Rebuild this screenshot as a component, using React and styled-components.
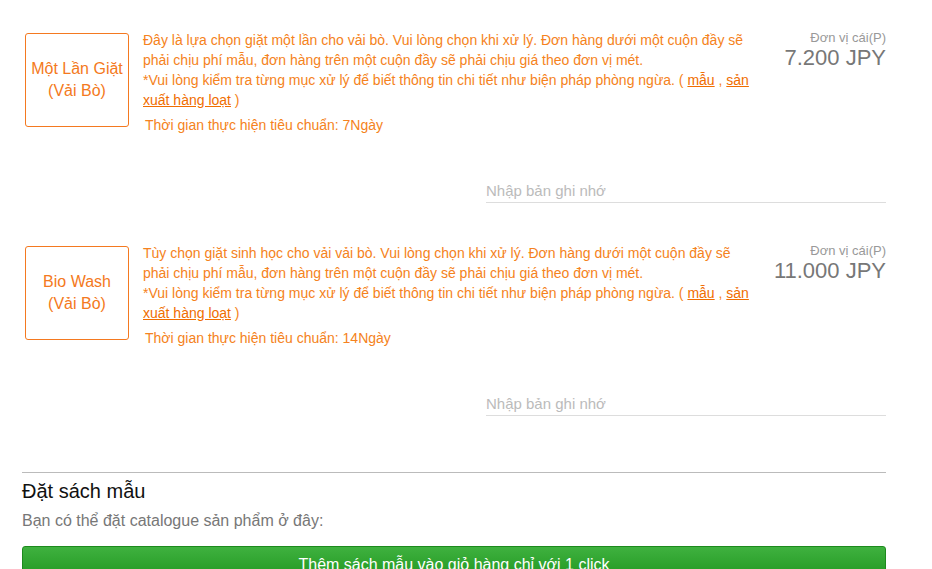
import React from "react";
import styled, { createGlobalStyle } from "styled-components";

const GlobalStyle = createGlobalStyle`
  html, body {
    margin: 0;
    padding: 0;
    background: #fff;
    font-family: "Liberation Sans", Arial, sans-serif;
  }
`;

const Page = styled.div`
  width: 864px;
  padding: 30px 0 0 22px;
`;

const Item = styled.div`
  display: flex;
  flex-direction: column;
  margin-bottom: 40px;
`;

const ItemRow = styled.div`
  display: flex;
  align-items: flex-start;
  padding-left: 3px;
`;

const NameBox = styled.div`
  flex: none;
  width: 102px;
  height: 92px;
  margin-top: 3px;
  border: 1px solid #f47920;
  border-radius: 3px;
  display: flex;
  align-items: center;
  justify-content: center;
  text-align: center;
  color: #f47920;
  font-size: 16px;
  line-height: 22px;
`;

const Detail = styled.div`
  width: 612px;
  margin-left: 14px;
  color: #f58220;
  font-size: 14px;
  line-height: 20px;
`;

const Link = styled.a`
  color: #f06d00;
  text-decoration: underline;
`;

const LeadTime = styled.div`
  margin-top: 5px;
  padding-left: 2px;
`;

const PriceCol = styled.div`
  flex: 1;
  display: flex;
  flex-direction: column;
  align-items: flex-end;
  margin-top: 1px;
`;

const PriceUnit = styled.div`
  color: #999;
  font-size: 13px;
  line-height: 14px;
`;

const PriceValue = styled.div`
  color: #777;
  font-size: 22px;
  line-height: 26px;
`;

const MemoRow = styled.div`
  display: flex;
  justify-content: flex-end;
  margin-top: 43px;
`;

const MemoInput = styled.input`
  width: 400px;
  height: 24px;
  border: none;
  border-bottom: 1px solid #ddd;
  padding: 0;
  font-family: inherit;
  font-size: 15px;
  color: #555;
  outline: none;
  &::placeholder {
    color: #bbb;
  }
`;

const Divider = styled.hr`
  margin: 56px 0 0;
  border: none;
  border-top: 1px solid #bbb;
`;

const SectionTitle = styled.h3`
  margin: 5px 0 0;
  font-weight: normal;
  font-size: 20px;
  line-height: 26px;
  color: #111;
`;

const SectionText = styled.p`
  margin: 7px 0 0;
  font-size: 16px;
  line-height: 20px;
  color: #777;
`;

const GreenButton = styled.button`
  display: block;
  width: 100%;
  height: 40px;
  margin-top: 15px;
  border: 1px solid #1d8a1d;
  border-radius: 3px;
  background: linear-gradient(#3fb13f, #1a921a);
  color: #fff;
  font-family: inherit;
  font-size: 16px;
  padding: 0 0 2px;
  cursor: pointer;
`;

const items = [
  {
    name: ["Một Lần Giặt", "(Vải Bò)"],
    text: "Đây là lựa chọn giặt một lần cho vải bò. Vui lòng chọn khi xử lý. Đơn hàng dưới một cuộn đầy sẽ phải chịu phí mẫu, đơn hàng trên một cuộn đầy sẽ phải chịu giá theo đơn vị mét.",
    days: "7Ngày",
    price: "7.200 JPY",
  },
  {
    name: ["Bio Wash", "(Vải Bò)"],
    text: "Tùy chọn giặt sinh học cho vải vải bò. Vui lòng chọn khi xử lý. Đơn hàng dưới một cuộn đầy sẽ phải chịu phí mẫu, đơn hàng trên một cuộn đầy sẽ phải chịu giá theo đơn vị mét.",
    days: "14Ngày",
    price: "11.000 JPY",
  },
];

const App = () => {
  return (
    <Page>
      <GlobalStyle />
      {items.map((it) => (
        <Item key={it.price}>
          <ItemRow>
            <NameBox>
              {it.name[0]}
              <br />
              {it.name[1]}
            </NameBox>
            <Detail>
              {it.text}
              <br />
              *Vui lòng kiểm tra từng mục xử lý để biết thông tin chi tiết như biện pháp phòng ngừa. ({" "}
              <Link href="#">mẫu</Link> , <Link href="#">sản xuất hàng loạt</Link> )
              <LeadTime>Thời gian thực hiện tiêu chuẩn: {it.days}</LeadTime>
            </Detail>
            <PriceCol>
              <PriceUnit>Đơn vị cái(P)</PriceUnit>
              <PriceValue>{it.price}</PriceValue>
            </PriceCol>
          </ItemRow>
          <MemoRow>
            <MemoInput placeholder="Nhập bản ghi nhớ" />
          </MemoRow>
        </Item>
      ))}
      <Divider />
      <SectionTitle>Đặt sách mẫu</SectionTitle>
      <SectionText>Bạn có thể đặt catalogue sản phẩm ở đây:</SectionText>
      <GreenButton>Thêm sách mẫu vào giỏ hàng chỉ với 1 click</GreenButton>
    </Page>
  );
};

export default App;
